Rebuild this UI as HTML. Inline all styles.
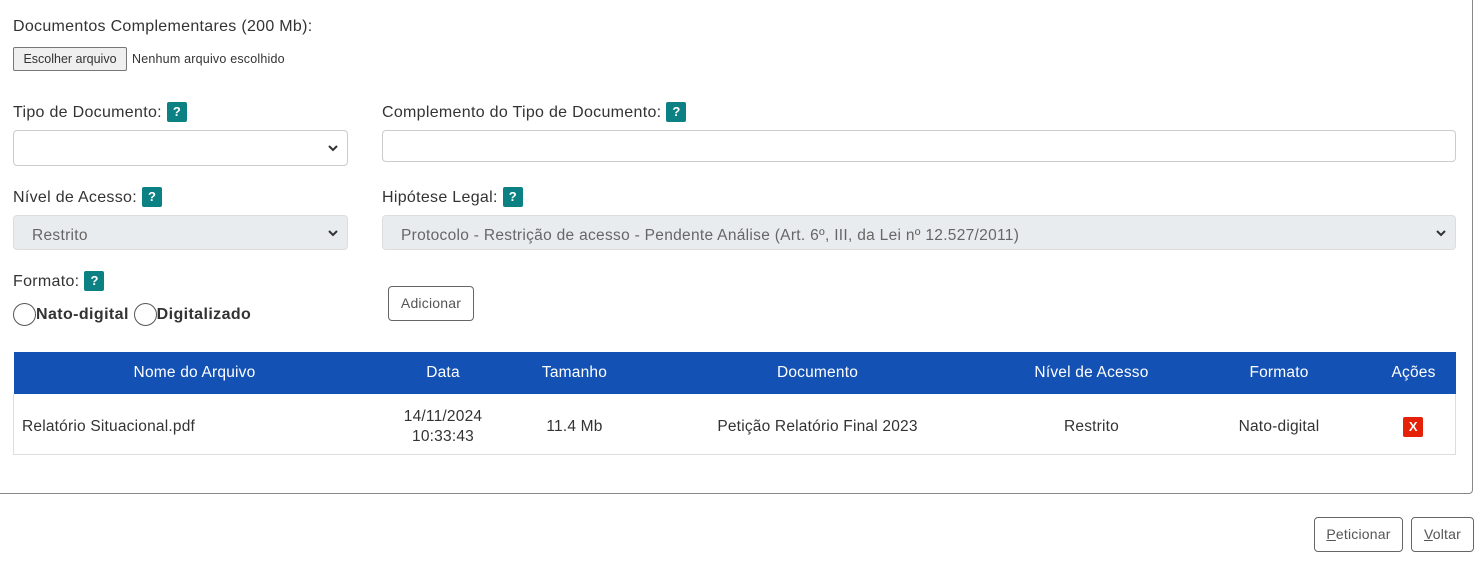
<!DOCTYPE html>
<html><head><meta charset="utf-8"><style>
*{box-sizing:border-box;margin:0;padding:0}
body{width:1481px;height:562px;background:#fff;font-family:"Liberation Sans",sans-serif;color:#333;position:relative;overflow:hidden}
.abs{position:absolute}
.panel{position:absolute;left:-10px;top:-10px;width:1483px;height:504px;border:1px solid #888;border-radius:4px}
.lbl{position:absolute;font-size:16px;letter-spacing:0.3px;color:#333}
.q{display:inline-block;width:20px;height:20px;background:#0c8184;color:#fff;font-weight:bold;font-size:13px;text-align:center;line-height:20px;border-radius:2px;vertical-align:1px;margin-left:5px;letter-spacing:0}
.inp{position:absolute;border:1px solid #ccc;border-radius:4px;height:36px;background:#fff}
.inp.dis{background:#e9ecef;border-color:#ddd;color:#666;font-size:15.5px;letter-spacing:0.3px;line-height:40px;padding-left:18px;height:35px}
.chev{position:absolute;right:8px;top:12px}
.btn{position:absolute;border:1px solid #666;border-radius:4px;background:#fff;font-size:14px;letter-spacing:0.2px;color:#555;text-align:center}
.radio{display:inline-block;width:23px;height:23px;border:1px solid #555;border-radius:50%;vertical-align:-7px}
table{position:absolute;left:13px;top:352px;width:1443px;border-collapse:collapse;font-size:15.5px;letter-spacing:0.2px}
th{background:#1351b4;color:#fff;font-weight:normal;height:41px;border-top:1px solid #1351b4}
td{height:61px;text-align:center;border-bottom:1px solid #ddd;line-height:20px;padding-top:6px}
tr.r td:first-child{border-left:1px solid #ddd}
tr.r td:last-child{border-right:1px solid #ddd}
</style></head><body>
<div class="panel"></div>
<div class="lbl" style="left:13px;top:18px">Documentos Complementares (200 Mb):</div>
<div class="abs" style="left:13px;top:47px;width:114px;height:24px;border:1px solid #777;border-radius:2px;background:#efefef;font-size:12.5px;line-height:22px;text-align:center">Escolher arquivo</div>
<div class="abs" style="left:132px;top:52px;font-size:12.5px;letter-spacing:0.2px">Nenhum arquivo escolhido</div>

<div class="lbl" style="left:13px;top:102px">Tipo de Documento:<span class="q">?</span></div>
<div class="inp" style="left:13px;top:130px;width:335px"><svg class="chev" width="12" height="10" viewBox="0 0 12 10"><path d="M2 3l4 4 4-4" stroke="#333" stroke-width="2" fill="none"/></svg></div>
<div class="lbl" style="left:382px;top:102px">Complemento do Tipo de Documento:<span class="q">?</span></div>
<div class="inp" style="left:382px;top:130px;width:1074px;height:32px"></div>

<div class="lbl" style="left:13px;top:187px">Nível de Acesso:<span class="q">?</span></div>
<div class="inp dis" style="left:13px;top:215px;width:335px">Restrito<svg class="chev" width="12" height="10" viewBox="0 0 12 10"><path d="M2 3l4 4 4-4" stroke="#333" stroke-width="2" fill="none"/></svg></div>
<div class="lbl" style="left:382px;top:187px">Hipótese Legal:<span class="q">?</span></div>
<div class="inp dis" style="left:382px;top:215px;width:1074px">Protocolo - Restrição de acesso - Pendente Análise (Art. 6º, III, da Lei nº 12.527/2011)<svg class="chev" width="12" height="10" viewBox="0 0 12 10"><path d="M2 3l4 4 4-4" stroke="#333" stroke-width="2" fill="none"/></svg></div>

<div class="lbl" style="left:13px;top:271px">Formato:<span class="q">?</span></div>
<div class="lbl" style="left:13px;top:303px;font-weight:bold;color:#333;letter-spacing:0.4px"><span class="radio"></span>Nato-digital <span class="radio"></span>Digitalizado</div>
<div class="btn" style="left:388px;top:286px;width:86px;height:35px;line-height:33px">Adicionar</div>

<table>
<tr><th style="width:362px">Nome do Arquivo</th><th style="width:135px">Data</th><th style="width:128px">Tamanho</th><th style="width:358px">Documento</th><th style="width:190px">Nível de Acesso</th><th style="width:185px">Formato</th><th>Ações</th></tr>
<tr class="r"><td style="text-align:left;padding-left:8px">Relatório Situacional.pdf</td><td>14/11/2024<br>10:33:43</td><td>11.4 Mb</td><td>Petição Relatório Final 2023</td><td>Restrito</td><td>Nato-digital</td><td><span style="display:inline-block;width:20px;height:20px;background:#e52207;color:#fff;font-weight:bold;font-size:13px;line-height:20px;border-radius:2px">X</span></td></tr>
</table>

<div class="btn" style="left:1314px;top:517px;width:89px;height:35px;line-height:33px"><u>P</u>eticionar</div>
<div class="btn" style="left:1411px;top:517px;width:63px;height:35px;line-height:33px"><u>V</u>oltar</div>
</body></html>
